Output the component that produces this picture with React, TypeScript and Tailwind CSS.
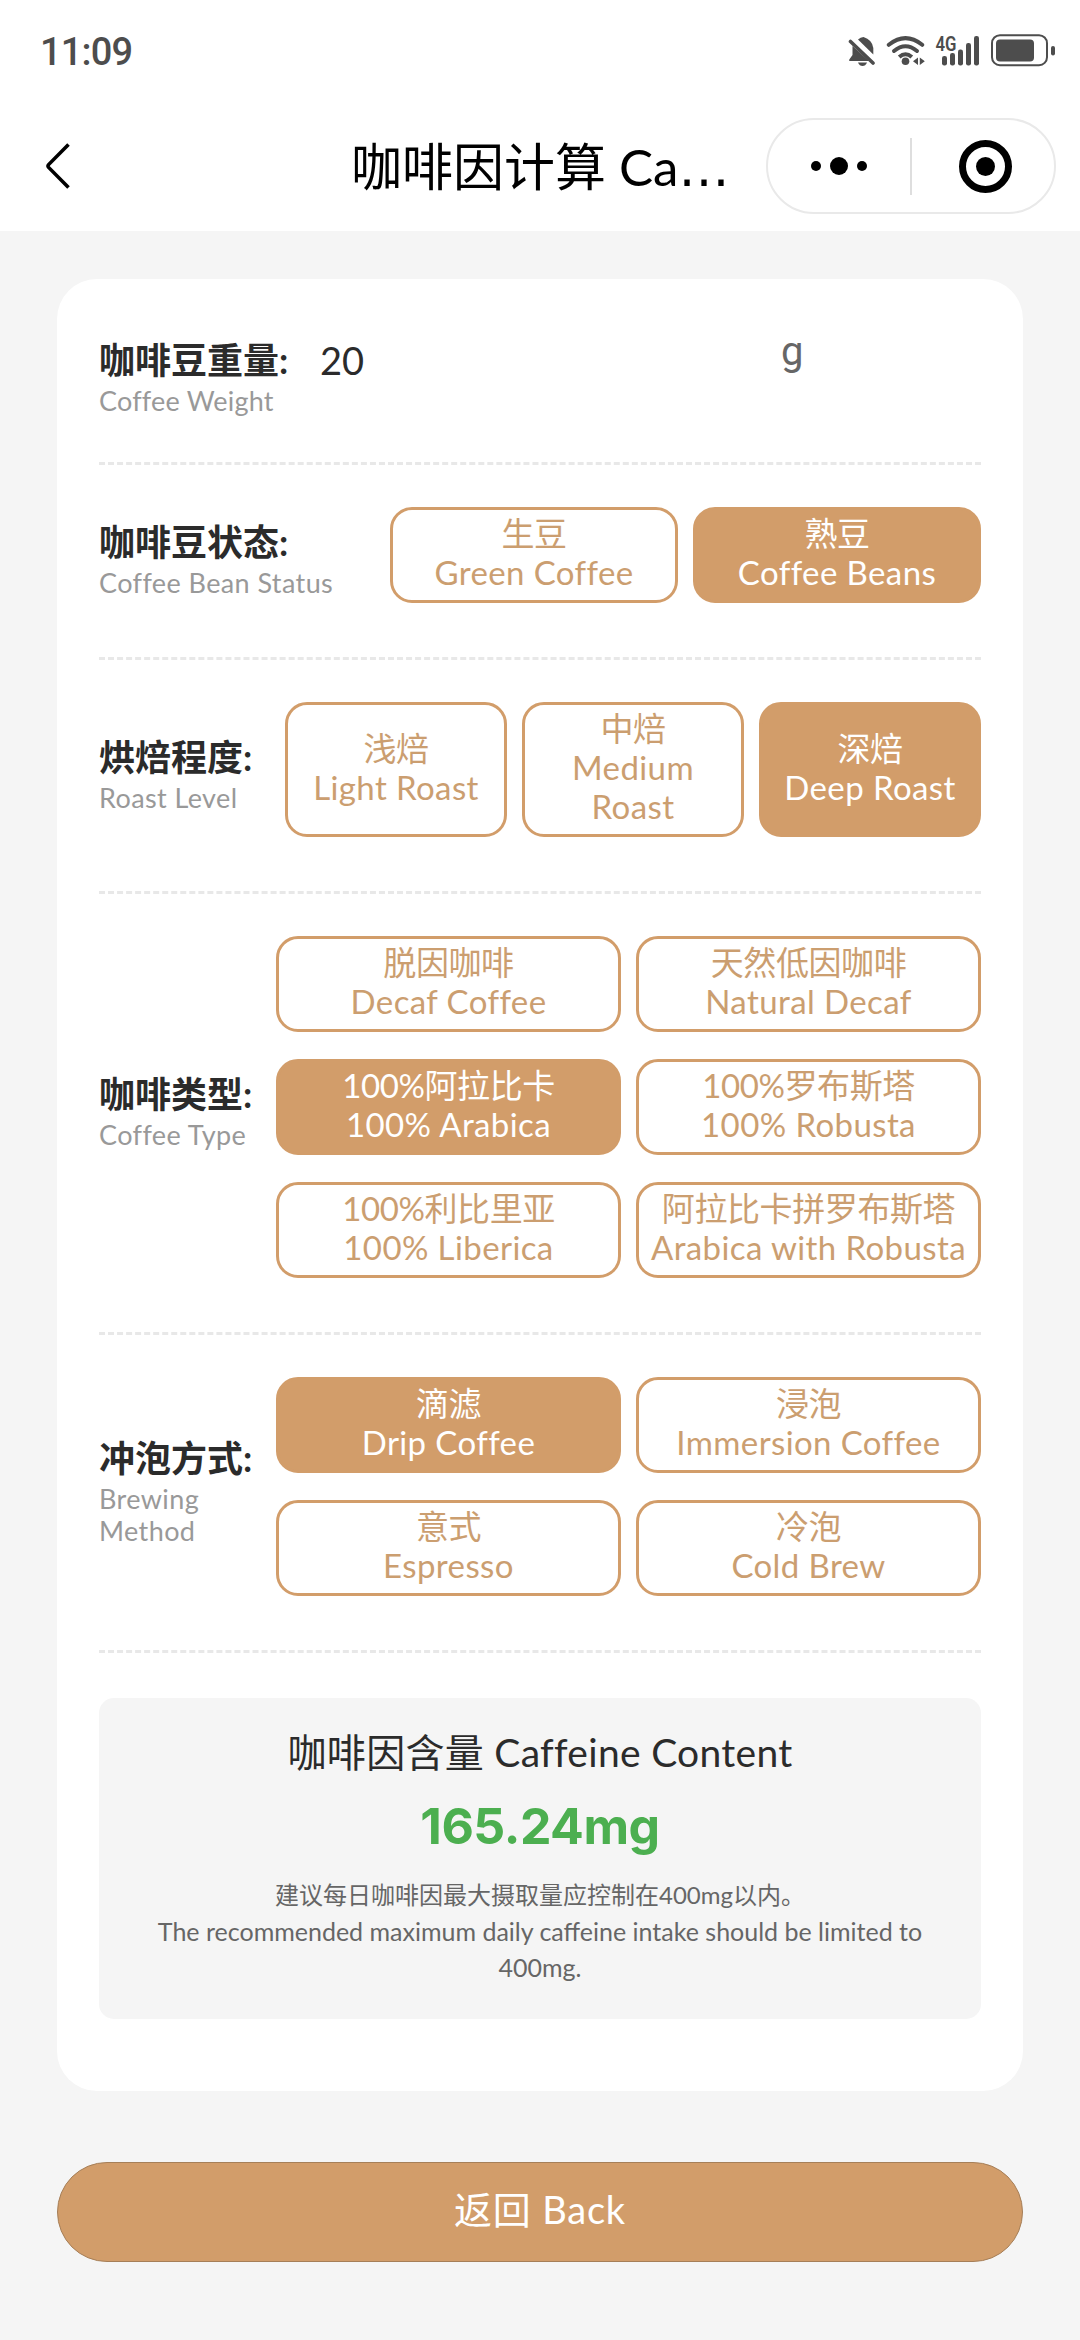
import React, { useState } from 'react';

interface Option {
  id: string;
  zh: string;
  en: string;
}

interface FieldProps {
  zh: string;
  en: string;
  labelClass?: string;
  children: React.ReactNode;
}

const STATUS_OPTIONS: Option[] = [
  { id: 'green', zh: '生豆', en: 'Green Coffee' },
  { id: 'roasted', zh: '熟豆', en: 'Coffee Beans' }
];

const ROAST_OPTIONS: Option[] = [
  { id: 'light', zh: '浅焙', en: 'Light Roast' },
  { id: 'medium', zh: '中焙', en: 'Medium Roast' },
  { id: 'deep', zh: '深焙', en: 'Deep Roast' }
];

const TYPE_OPTIONS: Option[] = [
  { id: 'decaf', zh: '脱因咖啡', en: 'Decaf Coffee' },
  { id: 'natural', zh: '天然低因咖啡', en: 'Natural Decaf' },
  { id: 'arabica', zh: '100%阿拉比卡', en: '100% Arabica' },
  { id: 'robusta', zh: '100%罗布斯塔', en: '100% Robusta' },
  { id: 'liberica', zh: '100%利比里亚', en: '100% Liberica' },
  { id: 'blend', zh: '阿拉比卡拼罗布斯塔', en: 'Arabica with Robusta' }
];

const BREW_OPTIONS: Option[] = [
  { id: 'drip', zh: '滴滤', en: 'Drip Coffee' },
  { id: 'immersion', zh: '浸泡', en: 'Immersion Coffee' },
  { id: 'espresso', zh: '意式', en: 'Espresso' },
  { id: 'cold', zh: '冷泡', en: 'Cold Brew' }
];

const StatusBar: React.FC = () => (
  <div className="flex h-[102px] items-center justify-between pl-[40px] pr-[24px] text-[#4d4d4d]">
    <span className="pt-[2px] font-[Roboto,sans-serif] text-[38px] font-medium leading-none tracking-[-0.8px]">
      11:09
    </span>
    <svg width="208" height="36" viewBox="848 33 208 36" fill="currentColor">
      {/* muted bell */}
      <path d="M858 39.5 Q860.5 37 863.5 37 Q872 39.5 873.3 48 V54.5 Z" />
      <path d="M852.5 46 L869 61 H850 Q848.5 61 849.3 59.4 L852.5 55 Z" />
      <path d="M858 62.5 H867 Q865.5 66 862.5 66 Q859.5 66 858 62.5 Z" />
      <path d="M850.5 41.5 L873 63" stroke="currentColor" strokeWidth="3.6" strokeLinecap="round" />
      {/* wifi */}
      <g fill="none" stroke="currentColor" strokeWidth="4" strokeLinecap="round">
        <path d="M888.8 44.8 Q905.5 31.5 922.2 44.8" />
        <path d="M894 51 Q905.5 41.5 917 51" />
        <path d="M899.2 57 Q905.5 51.5 911.8 57" strokeLinecap="butt" />
      </g>
      <circle cx="905.5" cy="61.2" r="3.8" />
      <path d="M918 57.5 V65 L913 61.2 Z M919.8 57.5 V65 L924.8 61.2 Z" />
      {/* signal */}
      <text
        x="935.5"
        y="50.5"
        fontFamily="Roboto, sans-serif"
        fontSize="20"
        fontWeight="600"
        textLength="21"
        lengthAdjust="spacingAndGlyphs"
      >
        4G
      </text>
      <rect x="942" y="56" width="5" height="9.4" rx="2.2" />
      <rect x="950" y="53" width="5" height="12.4" rx="2.2" />
      <rect x="958" y="49.5" width="5" height="15.9" rx="2.2" />
      <rect x="966" y="43" width="5" height="22.4" rx="2.2" />
      <rect x="974" y="36" width="5" height="29.4" rx="2.2" />
      {/* battery */}
      <rect x="992" y="35.2" width="55" height="30" rx="8" fill="none" stroke="currentColor" strokeWidth="2" />
      <rect x="996" y="39.5" width="38" height="22" rx="4" />
      <rect x="1051" y="46" width="4" height="9.5" rx="2" />
    </svg>
  </div>
);

const NavBar: React.FC = () => (
  <div className="flex h-[129px] items-center pb-[1px] pl-[44px] pr-[24px]">
    <svg width="28" height="50" viewBox="0 0 28 50" fill="none" stroke="#000" strokeWidth="3.6">
      <path d="M24.5 3.5 L4.6 23.6 Q3.4 25 4.6 26.4 L24.5 46.5" />
    </svg>
    <h1 className="ml-[279px] w-[400px] whitespace-nowrap pt-[4px] text-[51px] leading-[60px] text-black">
      咖啡因计算 Ca<span className="font-['DejaVu_Sans',sans-serif]">…</span>
    </h1>
    <div className="ml-auto flex h-[96px] w-[290px] shrink-0 items-center rounded-full border-2 border-[#e9e9e9]">
      <div className="flex w-[142px] items-center justify-center gap-[9px]">
        <span className="h-2.5 w-2.5 rounded-full bg-black" />
        <span className="h-[18px] w-[18px] rounded-full bg-black" />
        <span className="h-2.5 w-2.5 rounded-full bg-black" />
      </div>
      <span className="h-[57px] w-[2px] bg-[#dedede]" />
      <div className="flex flex-1 items-center justify-center pl-1">
        <span className="flex h-[53px] w-[53px] items-center justify-center rounded-full border-[7px] border-black">
          <span className="h-[19px] w-[19px] rounded-full bg-black" />
        </span>
      </div>
    </div>
  </div>
);

const Field: React.FC<FieldProps> = ({ zh, en, labelClass = '', children }) => (
  <div className="flex items-center justify-between border-b-3 border-dashed border-[#e8e8e8] py-[42px]">
    <div className={`pb-[6px] ${labelClass}`}>
      <div className="whitespace-nowrap text-[36px] font-bold leading-[50px] text-[#2b2b2b]">{zh}:</div>
      <div className="text-[27px] leading-[32px] tracking-[0.4px] text-[#999999]">{en}</div>
    </div>
    {children}
  </div>
);

interface OptionButtonProps {
  option: Option;
  active: boolean;
  onClick: () => void;
}

const OptionButton: React.FC<OptionButtonProps> = ({ option, active, onClick }) => (
  <button
    onClick={onClick}
    className={`flex min-h-[96px] flex-col items-center justify-center rounded-[22px] border-3 border-[#d29d6a] px-[8px] pb-[8px] pt-[4px] text-[33px] leading-[39px] ${
      active ? 'bg-[#d29d6a] text-white' : 'bg-white text-[#cb9e70]'
    }`}
  >
    <span className="whitespace-nowrap tracking-[-0.4px]">{option.zh}</span>
    <span className="tracking-[0.4px]">{option.en}</span>
  </button>
);

const App: React.FC = () => {
  const [weight, setWeight] = useState('20');
  const [status, setStatus] = useState('roasted');
  const [roast, setRoast] = useState('deep');
  const [type, setType] = useState('arabica');
  const [brew, setBrew] = useState('drip');

  return (
    <div className="min-h-[2340px] w-[1080px] bg-[#f5f5f5] font-[Lato,'Noto_Sans_CJK_SC',sans-serif]">
      <header className="bg-white">
        <StatusBar />
        <NavBar />
      </header>

      <main className="px-[57px] pt-[48px]">
        <div className="h-[1812px] rounded-[40px] bg-white px-[42px] pt-[13px]">
          <div className="flex h-[173px] items-start border-b-3 border-dashed border-[#e8e8e8] pt-[43px]">
            <div className="w-[221px]">
              <div className="whitespace-nowrap text-[36px] font-bold leading-[50px] text-[#2b2b2b]">咖啡豆重量:</div>
              <div className="text-[27px] leading-[32px] tracking-[0.2px] text-[#999999]">Coffee Weight</div>
            </div>
            <input
              value={weight}
              onChange={(e) => setWeight(e.target.value)}
              className="h-[50px] w-[461px] text-[38px] leading-[50px] text-[#2b2b2b] outline-none"
            />
            <span className="-mt-2 font-[Roboto,sans-serif] text-[40px] leading-[50px] text-[#666666]">g</span>
          </div>

          <Field zh="咖啡豆状态" en="Coffee Bean Status">
            <div className="mb-[12px] grid w-[591px] grid-cols-2 gap-[15px]">
              {STATUS_OPTIONS.map((o) => (
                <OptionButton key={o.id} option={o} active={status === o.id} onClick={() => setStatus(o.id)} />
              ))}
            </div>
          </Field>

          <Field zh="烘焙程度" en="Roast Level">
            <div className="mb-[12px] grid w-[696px] grid-cols-3 gap-[15px]">
              {ROAST_OPTIONS.map((o) => (
                <OptionButton key={o.id} option={o} active={roast === o.id} onClick={() => setRoast(o.id)} />
              ))}
            </div>
          </Field>

          <Field zh="咖啡类型" en="Coffee Type">
            <div className="mb-[12px] grid w-[705px] grid-cols-2 gap-x-[15px] gap-y-[27px]">
              {TYPE_OPTIONS.map((o) => (
                <OptionButton key={o.id} option={o} active={type === o.id} onClick={() => setType(o.id)} />
              ))}
            </div>
          </Field>

          <Field zh="冲泡方式" en="Brewing Method" labelClass="w-[157px]">
            <div className="mb-[12px] grid w-[705px] grid-cols-2 gap-x-[15px] gap-y-[27px]">
              {BREW_OPTIONS.map((o) => (
                <OptionButton key={o.id} option={o} active={brew === o.id} onClick={() => setBrew(o.id)} />
              ))}
            </div>
          </Field>

          <div className="mt-[45px] h-[321px] rounded-[15px] bg-[#f5f5f5] px-[40px] pt-[27px] text-center">
            <div className="text-[39px] leading-[54px] tracking-[0.3px] text-[#2b2b2b]">
              咖啡因含量 Caffeine Content
            </div>
            <div className="mt-[15px] font-[Inter,sans-serif] text-[50px] font-bold leading-[64px] tracking-[-0.5px] text-[#4caf50]">
              165.24mg
            </div>
            <div className="mt-[19px] leading-[36px] text-[#666666]">
              <p className="text-[24px]">建议每日咖啡因最大摄取量应控制在400mg以内。</p>
              <p className="text-[25px]">
                The recommended maximum daily caffeine intake should be limited to
                <br />
                400mg.
              </p>
            </div>
          </div>
        </div>

        <button className="mt-[71px] h-[100px] w-full rounded-full border border-[#a67f58] bg-[#d29d6a] pb-[6px] text-[38px] leading-[50px] tracking-[0.8px] text-white">
          返回 Back
        </button>
      </main>
    </div>
  );
};

export default App;
